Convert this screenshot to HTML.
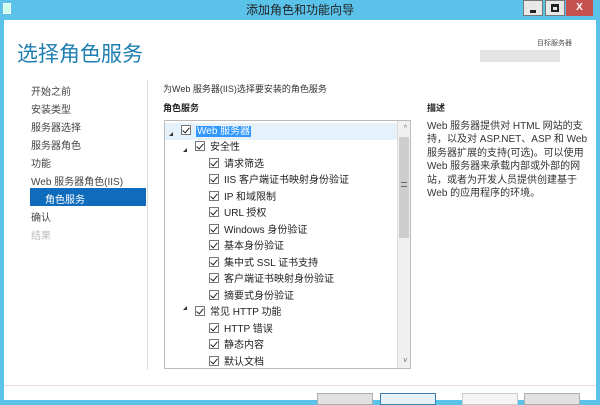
<!DOCTYPE html>
<html><head><meta charset="utf-8"><style>
*{margin:0;padding:0;box-sizing:border-box}
body{width:600px;height:400px;overflow:hidden;background:#5bc3ea;font-family:"Liberation Sans","Noto Sans CJK SC",sans-serif;position:relative}
.title{position:absolute;left:0;top:0;width:600px;height:20px;text-align:center;font-size:12px;line-height:20px;color:#222}
.win{position:absolute;left:4px;top:20px;width:592px;height:380px;background:#fff}
.a{position:absolute;white-space:nowrap}
.nav{font-size:10px;color:#444}
.row{position:absolute;font-size:10px;color:#222;white-space:nowrap;height:15px;line-height:15px}
.cb{display:inline-block;width:10px;height:10px;border:1px solid #777;vertical-align:-1px;margin-right:5px;position:relative;background:#fff}
.cb:after{content:"";position:absolute;left:2px;top:0px;width:3px;height:6px;border:solid #222;border-width:0 1.5px 1.5px 0;transform:rotate(40deg)}
.tri{position:absolute;width:0;height:0;border-left:4px solid transparent;border-bottom:4px solid #333}
.btn{position:absolute;top:393px;height:12px;width:56px;background:#e1e1e1;border:1px solid #adadad}
</style></head><body>
<div class="title">添加角色和功能向导</div>
<div class="a" style="left:3px;top:3px;width:8px;height:11px;border:1px solid #fff;background:#cfe"></div>
<div class="a" style="left:523px;top:0px;width:20px;height:16px;background:#e8e8e8;border:1px solid #777"><div style="position:absolute;left:6px;top:9px;width:6px;height:3px;background:#222"></div></div>
<div class="a" style="left:545px;top:0px;width:20px;height:16px;background:#e8e8e8;border:1px solid #777"><div style="position:absolute;left:5px;top:3px;width:8px;height:8px;border:2px solid #222;border-top-width:3px"></div></div>
<div class="a" style="left:566px;top:0px;width:27px;height:16px;background:#c75050;color:#fff;font-size:10px;font-weight:bold;text-align:center;line-height:16px">X</div>
<div class="win"></div>
<div class="a" style="left:17px;top:38px;font-size:21px;color:#1e7eb0">选择角色服务</div>
<div class="a" style="left:537px;top:38px;font-size:7px;color:#555">目标服务器</div>
<div class="a" style="left:480px;top:50px;width:80px;height:12px;background:#e4e4e4"></div>
<div class="a" style="left:147px;top:80px;width:1px;height:290px;background:#ddd"></div>
<div class="a nav" style="left:31px;top:83px">开始之前</div>
<div class="a nav" style="left:31px;top:101px">安装类型</div>
<div class="a nav" style="left:31px;top:119px">服务器选择</div>
<div class="a nav" style="left:31px;top:137px">服务器角色</div>
<div class="a nav" style="left:31px;top:155px">功能</div>
<div class="a nav" style="left:31px;top:173px">Web 服务器角色(IIS)</div>
<div class="a" style="left:30px;top:188px;width:116px;height:18px;background:#0f6cbd"></div>
<div class="a nav" style="left:45px;top:191px;color:#fff">角色服务</div>
<div class="a nav" style="left:31px;top:209px">确认</div>
<div class="a nav" style="left:31px;top:227px;color:#bbb">结果</div>
<div class="a" style="left:163px;top:82px;font-size:9px;color:#333">为Web 服务器(IIS)选择要安装的角色服务</div>
<div class="a" style="left:163px;top:101px;font-size:9px;font-weight:bold;color:#222">角色服务</div>
<div class="a" style="left:427px;top:101px;font-size:9px;font-weight:bold;color:#222">描述</div>
<div class="a" style="left:427px;top:120px;font-size:10px;line-height:13.4px;color:#333">Web 服务器提供对 HTML 网站的支<br>持，以及对 ASP.NET、ASP 和 Web<br>服务器扩展的支持(可选)。可以使用<br>Web 服务器来承载内部或外部的网<br>站，或者为开发人员提供创建基于<br>Web 的应用程序的环境。</div>
<div class="a" style="left:164px;top:120px;width:247px;height:249px;border:1px solid #bbb;overflow:hidden">
 <div class="a" style="left:0;top:2px;width:232px;height:17px;background:#e5f1fb"></div>
 <div class="a" style="right:0;top:0;width:13px;height:247px;background:#f0f0f0;border-left:1px solid #ddd"></div>
 <div class="a" style="right:1px;top:16px;width:10px;height:101px;background:#cdcdcd"></div>
 <div class="a" style="right:3px;top:4px;font-size:7px;color:#666">^</div>
 <div class="a" style="right:3px;top:61px;width:6px;height:5px;border-top:1px solid #666;border-bottom:1px solid #666"></div>
 <div class="a" style="right:3px;top:236px;font-size:7px;color:#666">v</div>
</div>
<div class="tri" style="left:169px;top:132px"></div>
<div class="tri" style="left:183px;top:148px"></div>
<div class="tri" style="left:183px;top:306px"></div>
<div class="row" style="left:181px;top:124px"><span class="cb"></span><span style="background:#3399ff;color:#fff;padding:0 1px">Web 服务器</span></div>
<div class="row" style="left:195px;top:140px"><span class="cb"></span>安全性</div>
<div class="row" style="left:209px;top:157px"><span class="cb"></span>请求筛选</div>
<div class="row" style="left:209px;top:173px"><span class="cb"></span>IIS 客户端证书映射身份验证</div>
<div class="row" style="left:209px;top:190px"><span class="cb"></span>IP 和域限制</div>
<div class="row" style="left:209px;top:206px"><span class="cb"></span>URL 授权</div>
<div class="row" style="left:209px;top:223px"><span class="cb"></span>Windows 身份验证</div>
<div class="row" style="left:209px;top:239px"><span class="cb"></span>基本身份验证</div>
<div class="row" style="left:209px;top:256px"><span class="cb"></span>集中式 SSL 证书支持</div>
<div class="row" style="left:209px;top:272px"><span class="cb"></span>客户端证书映射身份验证</div>
<div class="row" style="left:209px;top:289px"><span class="cb"></span>摘要式身份验证</div>
<div class="row" style="left:195px;top:305px"><span class="cb"></span>常见 HTTP 功能</div>
<div class="row" style="left:209px;top:322px"><span class="cb"></span>HTTP 错误</div>
<div class="row" style="left:209px;top:338px"><span class="cb"></span>静态内容</div>
<div class="row" style="left:209px;top:355px"><span class="cb"></span>默认文档</div>
<div class="a" style="left:4px;top:385px;width:592px;height:1px;background:#eadcd8"></div>
<div class="btn" style="left:317px"></div>
<div class="btn" style="left:380px;border-color:#3c7fb1;background:#e5f1fb"></div>
<div class="btn" style="left:462px;background:#f4f4f4;border-color:#ccc"></div>
<div class="btn" style="left:524px"></div>
</body></html>
